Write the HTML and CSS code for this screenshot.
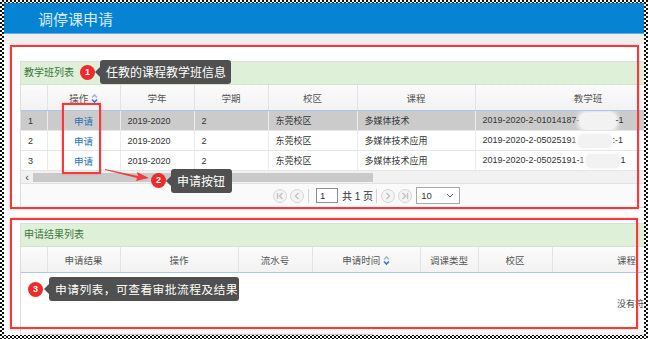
FILE: index.html
```html
<!DOCTYPE html>
<html lang="zh">
<head>
<meta charset="utf-8">
<title>调停课申请</title>
<link rel="stylesheet" href="styles.css">
</head>
<body>
<div class="frame">
  <div class="screen">
    <div class="topbar"><span class="title">调停课申请</span></div>
    <div class="strip"></div>
    <div class="content">
      <div class="panel p1">
        <div class="phead">教学班列表</div>
        <table class="grid">
          <colgroup><col style="width:26px"><col style="width:73px"><col style="width:74px"><col style="width:74px"><col style="width:89px"><col style="width:118px"><col style="width:226px"></colgroup>
          <thead>
            <tr><th></th><th>操作 <svg class="sort" width="7" height="11" viewBox="0 0 7 11"><path d="M1 4.5L3.5 2L6 4.5" fill="none" stroke="#a9b9cc" stroke-width="1.6"/><path d="M1 6.5L3.5 9L6 6.5" fill="none" stroke="#2f7bd6" stroke-width="1.6"/></svg></th><th>学年</th><th>学期</th><th>校区</th><th>课程</th><th class="wide">教学班</th></tr>
          </thead>
          <tbody>
            <tr class="sel"><td>1</td><td class="c"><a class="link">申请</a></td><td>2019-2020</td><td>2</td><td>东莞校区</td><td>多媒体技术</td><td>2019-2020-2-01014187-<span class="blot"></span>-1</td></tr>
            <tr><td>2</td><td class="c"><a class="link">申请</a></td><td>2019-2020</td><td>2</td><td>东莞校区</td><td>多媒体技术应用</td><td>2019-2020-2-05025191<span class="blot"></span>:-1</td></tr>
            <tr><td>3</td><td class="c"><a class="link">申请</a></td><td>2019-2020</td><td>2</td><td>东莞校区</td><td>多媒体技术应用</td><td>2019-2020-2-05025191-1<span class="blot"></span>1</td></tr>
          </tbody>
        </table>
        <div class="hscroll"><span class="larr">‹</span><div class="thumb"></div></div>
        <div class="pager">
          <svg class="pbtn" width="14" height="14" viewBox="0 0 14 14"><circle cx="7" cy="7" r="6.5" fill="#f4f4f4" stroke="#d4d4d4"/><path d="M4.5 4v6M9.5 4L6.5 7L9.5 10" fill="none" stroke="#c2c2c2" stroke-width="1.4"/></svg>
          <svg class="pbtn" width="14" height="14" viewBox="0 0 14 14"><circle cx="7" cy="7" r="6.5" fill="#f4f4f4" stroke="#d4d4d4"/><path d="M8.5 4L5.5 7L8.5 10" fill="none" stroke="#c2c2c2" stroke-width="1.4"/></svg>
          <span class="psep"></span>
          <span class="pinput">1</span>
          <span class="ptext">共 1 页</span>
          <span class="psep s2"></span>
          <svg class="pbtn" width="14" height="14" viewBox="0 0 14 14"><circle cx="7" cy="7" r="6.5" fill="#f4f4f4" stroke="#d4d4d4"/><path d="M5.5 4L8.5 7L5.5 10" fill="none" stroke="#c2c2c2" stroke-width="1.4"/></svg>
          <svg class="pbtn" width="14" height="14" viewBox="0 0 14 14"><circle cx="7" cy="7" r="6.5" fill="#f4f4f4" stroke="#d4d4d4"/><path d="M4.5 4L7.5 7L4.5 10M9.5 4v6" fill="none" stroke="#c2c2c2" stroke-width="1.4"/></svg>
          <span class="psel">10<svg width="8" height="5" viewBox="0 0 8 5"><path d="M1 1L4 4L7 1" fill="none" stroke="#666" stroke-width="1"/></svg></span>
        </div>
      </div>

      <div class="panel p2">
        <div class="phead">申请结果列表</div>
        <table class="grid">
          <colgroup><col style="width:26px"><col style="width:73px"><col style="width:118px"><col style="width:74px"><col style="width:108px"><col style="width:58px"><col style="width:74px"><col style="width:149px"></colgroup>
          <thead>
            <tr><th></th><th>申请结果</th><th>操作</th><th>流水号</th><th>申请时间 <svg class="sort" width="7" height="11" viewBox="0 0 7 11"><path d="M1 4.5L3.5 2L6 4.5" fill="none" stroke="#a9b9cc" stroke-width="1.6"/><path d="M1 6.5L3.5 9L6 6.5" fill="none" stroke="#2f7bd6" stroke-width="1.6"/></svg></th><th>调课类型</th><th>校区</th><th class="wide">课程</th></tr>
          </thead>
        </table>
        <div class="empty">没有符合条件的记录</div>
        <div class="hscroll low"><span class="larr"></span><div class="thumb"></div></div>
      </div>
    </div>

    <div class="mark box1"></div>
    <div class="mark box2"></div>
    <div class="mark box3"></div>

    <span class="badge b1">1</span>
    <div class="tip t1">任教的课程教学班信息</div>

    <svg class="arrow" width="48" height="14" viewBox="0 0 48 14"><polygon points="0,1 33,8 32,4 44,10 31,13 32,10 0,2" fill="#f23b3b"/></svg>
    <span class="badge b2">2</span>
    <div class="tip t2">申请按钮</div>

    <span class="badge b3">3</span>
    <div class="tip t3">申请列表，可查看审批流程及结果</div>
  </div>
</div>
</body>
</html>
```

FILE: styles.css
```css
html, body {
  margin: 0;
  padding: 0;
}
body {
  width: 648px;
  height: 339px;
  overflow: hidden;
  font-family: "Liberation Sans", "Noto Sans CJK SC", sans-serif;
  color: #333;
}
.frame {
  box-sizing: border-box;
  width: 648px;
  height: 339px;
  padding: 3px 4px 4px 4px;
  background: repeating-conic-gradient(#111 0 25%, #fff 0 50%) 0 0 / 4px 4px;
}
.screen {
  position: relative;
  width: 100%;
  height: 100%;
  background: #fff;
  overflow: hidden;
}
.topbar {
  height: 30px;
  background: #0683d3;
  border-bottom: 1px solid #5fb0e6;
  display: flex;
  align-items: center;
  padding-left: 34px;
}
.title {
  font-family: "Noto Sans CJK SC", sans-serif;
  font-size: 15px;
  color: #d9ebf9;
}
.strip {
  height: 10px;
  background: #efefef;
}
.content {
  padding: 17px 0 0 16px;
  width: 700px;
}
.panel {
  width: 680px;
  border: 1px solid #dedede;
  border-right: none;
  background: #fff;
}
.p2 {
  margin-top: 15px;
}
.phead {
  height: 22px;
  background: #dff0d8;
  border-bottom: 1px solid #d3e6cb;
  color: #3c763d;
  font-size: 10px;
  line-height: 22px;
  padding-left: 3px;
}
.grid {
  width: 680px;
  table-layout: fixed;
  border-collapse: collapse;
}
.grid th {
  height: 25px;
  padding: 0;
  background: linear-gradient(#fbfbfb, #f2f2f2);
  border-right: 1px solid #e3e3e3;
  border-bottom: 1px solid #a9c8ea;
  font-weight: normal;
  font-size: 9.5px;
  color: #555;
  text-align: center;
  white-space: nowrap;
}
.grid th .sort {
  vertical-align: -2px;
}
.grid td {
  height: 19px;
  padding: 0 0 0 7px;
  border-right: 1px solid #ececec;
  border-bottom: 1px solid #e6e6e6;
  font-size: 9px;
  color: #333;
  white-space: nowrap;
  overflow: hidden;
}
.grid td.c {
  text-align: center;
  padding: 0;
}
.grid tr.sel td {
  background: #cbcbcb;
}
.link {
  color: #2a72b8;
  font-size: 9.5px;
}
.blot {
  display: inline-block;
  width: 34px;
  height: 14px;
  vertical-align: middle;
  background: #f2f2f2;
  border-radius: 5px;
  box-shadow: 0 0 4px 3px #fbfbfb;
  margin: 0 1px;
}
.hscroll {
  height: 12px;
  background: #f1f1f1;
  display: flex;
  align-items: center;
}
.hscroll.low {
  margin-top: 1px;
}
.larr {
  width: 12px;
  font-size: 11px;
  line-height: 12px;
  color: #444;
  text-align: center;
}
.thumb {
  width: 340px;
  height: 9px;
  background: #c9c9c9;
}
.pager {
  height: 23px;
  border-top: 1px solid #e2e2e2;
  background: #fafafa;
  display: flex;
  align-items: center;
  padding-left: 252px;
  font-size: 10px;
  color: #333;
}
.pbtn {
  margin-right: 3px;
}
.psep {
  width: 1px;
  height: 14px;
  background: #cdd6e0;
  margin: 0 7px 0 1px;
}
.psep.s2 {
  margin: 0 4px 0 3px;
}
.pinput {
  box-sizing: border-box;
  width: 22px;
  height: 15px;
  border: 1px solid #8f8f8f;
  background: #fff;
  font-size: 9.5px;
  line-height: 13px;
  padding-left: 3px;
}
.ptext {
  margin-left: 4px;
  font-size: 10px;
}
.psel {
  box-sizing: border-box;
  width: 44px;
  height: 17px;
  border: 1px solid #a9a9a9;
  background: #fff;
  margin-left: 1px;
  display: flex;
  align-items: center;
  justify-content: space-between;
  padding: 0 5px 0 4px;
  font-size: 9.5px;
}
.empty {
  height: 58px;
  box-sizing: border-box;
  padding: 24px 0 0 596px;
  font-size: 9px;
  color: #444;
  white-space: nowrap;
}

/* annotations laid over the screenshot */
.mark {
  position: absolute;
  box-sizing: border-box;
  border: 2px solid #f6393b;
  box-shadow: 0 0 2px rgba(255, 60, 60, 0.45);
}
.box1 { left: 6px; top: 42px; width: 629px; height: 164px; }
.box2 { left: 6px; top: 215px; width: 628px; height: 111px; }
.box3 { left: 58px; top: 100px; width: 39px; height: 71px; }
.badge {
  position: absolute;
  width: 15px;
  height: 15px;
  border-radius: 50%;
  background: #ee2a2a;
  color: #fff;
  font-size: 9px;
  font-weight: bold;
  line-height: 15px;
  text-align: center;
}
.b1 { left: 76px; top: 62px; }
.b2 { left: 147px; top: 170px; }
.b3 { left: 24px; top: 279px; }
.tip {
  position: absolute;
  box-sizing: border-box;
  height: 24px;
  background: #4f504f;
  color: #fff;
  border-radius: 3px;
  font-family: "Noto Sans CJK SC", sans-serif;
  font-size: 12px;
  line-height: 24px;
  padding-left: 6px;
  white-space: nowrap;
}
.tip::before {
  content: "";
  position: absolute;
  left: -5px;
  top: 7px;
  border-style: solid;
  border-width: 5px 5px 5px 0;
  border-color: transparent #4f504f transparent transparent;
}
.t1 { left: 96px; top: 57px; width: 131px; }
.t2 { left: 167px; top: 166px; width: 61px; }
.t3 { left: 45px; top: 274px; width: 190px; font-size: 11.8px; letter-spacing: 0.4px; }
.arrow {
  position: absolute;
  left: 101px;
  top: 165px;
}
```
